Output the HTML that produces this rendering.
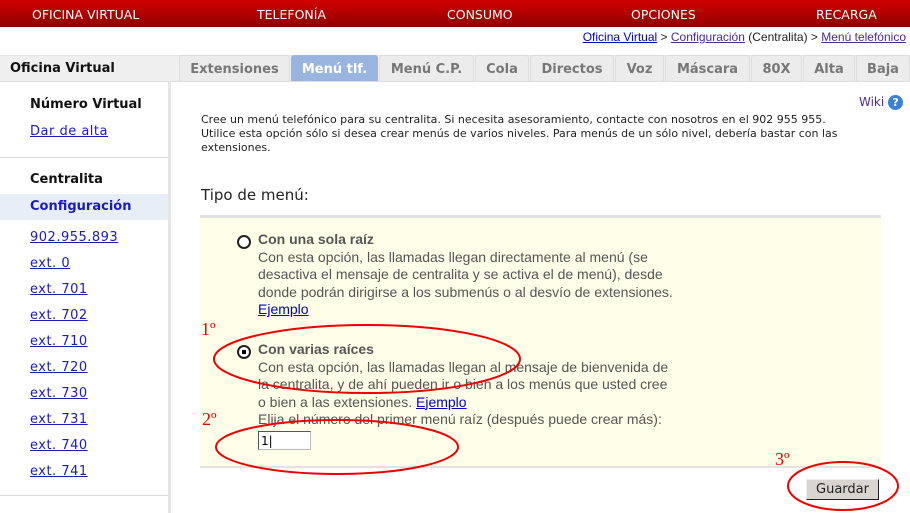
<!DOCTYPE html><html><head><meta charset="utf-8"><style>
body{margin:0;width:910px;height:513px;background:#fff;font-family:"DejaVu Sans","Liberation Sans",sans-serif;position:relative;overflow:hidden}
.a{position:absolute;white-space:nowrap}
.top{left:0;top:0;width:910px;height:27px;background:linear-gradient(#d20000,#8e0000);}
.top span{position:absolute;top:7px;color:#fff;font-size:12.5px}
.bc{right:4px;top:30px;font-size:12px;color:#222;font-family:"Liberation Sans",sans-serif}
.bc a{color:#4a2a9a;text-decoration:underline}
.bc a:first-child{color:#00c}
.tab{top:55px;height:26px;background:#ececec;border:1px solid #ddd;border-bottom:none;border-radius:3px 3px 0 0;font-weight:bold;font-size:13px;color:#777;text-align:center;line-height:27px;box-sizing:border-box}
.side a,.side b{position:absolute;left:30px;font-size:13px}
.side a{color:#1a1ac0;text-decoration:underline;letter-spacing:.5px}
.side b{color:#111}
.t{font-size:11px;color:#222;left:201px}
.y{left:200px;top:215px;width:681px;height:253px;background:#fffee8;border-top:3px solid #e2e2e2;border-bottom:2px solid #e2e2e2;box-sizing:border-box}
.o{font-family:"Liberation Sans",sans-serif;font-size:14px;color:#555;left:258px;line-height:17.5px}
.o a{color:#00c;text-decoration:underline}
.red{color:#e00;font-family:"Liberation Serif",serif;font-size:18px}
</style></head><body>
<div class="a top"><span style="left:32px">OFICINA VIRTUAL</span><span style="left:257px">TELEFONÍA</span><span style="left:447px">CONSUMO</span><span style="left:631px">OPCIONES</span><span style="left:816px">RECARGA</span></div>
<div class="a bc"><a>Oficina Virtual</a> &gt; <a>Configuración</a> (Centralita) &gt; <a>Menú telefónico</a></div>
<div class="a" style="left:0;top:55px;width:910px;height:27px;background:#efefef;border-top:1px solid #e4e4e4;border-bottom:1px solid #ddd;box-sizing:border-box"></div>
<div class="a" style="left:10px;top:61px;font-weight:bold;font-size:13px;color:#111">Oficina Virtual</div>
<div class="a tab" style="left:179px;width:111px">Extensiones</div>
<div class="a tab" style="left:291px;width:87px;background:#99b4de;color:#fff;border-color:#99b4de">Menú tlf.</div>
<div class="a tab" style="left:379px;width:95px">Menú C.P.</div>
<div class="a tab" style="left:475px;width:54px">Cola</div>
<div class="a tab" style="left:530px;width:84px">Directos</div>
<div class="a tab" style="left:615px;width:49px">Voz</div>
<div class="a tab" style="left:665px;width:85px">Máscara</div>
<div class="a tab" style="left:751px;width:51px">80X</div>
<div class="a tab" style="left:803px;width:52px">Alta</div>
<div class="a tab" style="left:856px;width:54px">Baja</div>
<div class="a" style="left:168px;top:82px;width:3px;height:431px;background:#e6e6e6"></div>
<div class="a" style="left:0;top:157px;width:168px;height:1px;background:#ddd"></div>
<div class="a" style="left:0;top:194px;width:168px;height:26px;background:#e8eef8"></div>
<div class="a" style="left:0;top:495px;width:168px;height:1px;background:#ddd"></div>
<div class="side">
<b style="top:97px">Número Virtual</b><a style="top:124px">Dar de alta</a>
<b style="top:172px">Centralita</b><b style="top:199px;color:#1a1ac0">Configuración</b>
<a style="top:230px">902.955.893</a><a style="top:256px">ext. 0</a><a style="top:282px">ext. 701</a><a style="top:308px">ext. 702</a><a style="top:334px">ext. 710</a><a style="top:360px">ext. 720</a><a style="top:386px">ext. 730</a><a style="top:412px">ext. 731</a><a style="top:438px">ext. 740</a><a style="top:464px">ext. 741</a>
</div>
<div class="a" style="left:859px;top:95px;font-size:12px;color:#4a2a9a">Wiki <span style="display:inline-block;width:15px;height:15px;border-radius:50%;background:#3a7fd8;color:#fff;font-size:11px;text-align:center;line-height:15px;font-weight:bold">?</span></div>
<div class="a t" style="top:113px">Cree un menú telefónico para su centralita. Si necesita asesoramiento, contacte con nosotros en el 902 955 955.</div>
<div class="a t" style="top:127px">Utilice esta opción sólo si desea crear menús de varios niveles. Para menús de un sólo nivel, debería bastar con las</div>
<div class="a t" style="top:141px">extensiones.</div>
<div class="a" style="left:201px;top:186px;font-size:15px;color:#222">Tipo de menú:</div>
<div class="a y"></div>
<div class="a" style="left:237px;top:235px;width:10px;height:10px;border:2px solid #222;border-radius:50%;background:#fff"></div>
<div class="a" style="left:237px;top:345px;width:10px;height:10px;border:2px solid #222;border-radius:50%;background:#fff"><div style="margin:3px;width:4px;height:4px;background:#000"></div></div>
<div class="a o" style="top:231px"><b>Con una sola raíz</b><br>Con esta opción, las llamadas llegan directamente al menú (se<br>desactiva el mensaje de centralita y se activa el de menú), desde<br>donde podrán dirigirse a los submenús o al desvío de extensiones.<br><a>Ejemplo</a></div>
<div class="a o" style="top:341px"><b>Con varias raíces</b><br>Con esta opción, las llamadas llegan al mensaje de bienvenida de<br>la centralita, y de ahí pueden ir o bien a los menús que usted cree<br>o bien a las extensiones. <a>Ejemplo</a><br>Elija el número del primer menú raíz (después puede crear más):</div>
<div class="a" style="left:258px;top:431px;width:53px;height:19px;border:1px solid #bbb;border-top-color:#555;border-left-color:#555;background:#fff;font-size:12px;line-height:19px;padding-left:2px;box-sizing:border-box">1|</div>
<div class="a" style="left:806px;top:479px;width:73px;height:21px;background:#d8d4d0;border:1px solid;border-color:#eee #222 #222 #eee;box-sizing:border-box;font-size:13px;color:#222;text-align:center;line-height:19px">Guardar</div>
<div class="a red" style="left:201px;top:319px">1º</div>
<div class="a red" style="left:202px;top:409px">2º</div>
<div class="a red" style="left:775px;top:449px">3º</div>
<svg class="a" style="left:0;top:0" width="910" height="513"><g fill="none" stroke="#e00" stroke-width="2">
<ellipse cx="367" cy="359" rx="153" ry="34"/>
<ellipse cx="337" cy="447" rx="121" ry="27"/>
<ellipse cx="843" cy="486" rx="55" ry="24"/></g></svg>
</body></html>
